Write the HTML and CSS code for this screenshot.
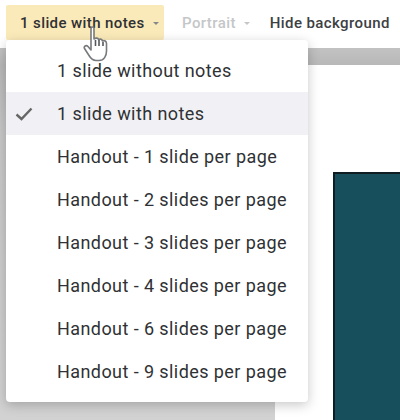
FILE: index.html
```html
<!DOCTYPE html>
<html lang="en">
<head>
<meta charset="utf-8">
<title>Print settings</title>
<link rel="stylesheet" href="styles.css">
</head>
<body>
<div class="toolbar">
  <div class="tool active"><span>1 slide with notes</span><i class="caret"></i></div>
  <div class="tool disabled"><span>Portrait</span><i class="caret"></i></div>
  <div class="tool plain"><span>Hide background</span></div>
</div>
<div class="stage">
  <div class="page"><div class="slide"></div></div>
</div>
<ul class="menu">
  <li>1 slide without notes</li>
  <li class="selected"><svg class="check" width="18" height="14" viewBox="0 0 18 14"><path d="M1.5 7.5 L6.5 12 L16.5 1.5" fill="none" stroke="#666" stroke-width="2.4"/></svg>1 slide with notes</li>
  <li>Handout - 1 slide per page</li>
  <li>Handout - 2 slides per page</li>
  <li>Handout - 3 slides per page</li>
  <li>Handout - 4 slides per page</li>
  <li>Handout - 6 slides per page</li>
  <li>Handout - 9 slides per page</li>
</ul>
<svg class="cursor" width="30" height="38" viewBox="0 0 30 38">
  <path d="M8 3.5 C8 1.5 11 1.5 11 3.5 L11 14 C13 12.5 15 13 15.5 14.5 C17.5 13.5 19 14.5 19.5 16 C21.5 15 23.5 16 23.5 18.5 L23.5 26 C23.5 31 21 35.5 16 35.5 L13 35.5 C9.5 35.5 7.5 33 6 30.5 L1.5 23.5 C0.5 21.5 3 19.5 5 21.5 L8 25 Z" fill="#fff" stroke="#77797c" stroke-width="1.6" stroke-linejoin="round"/>
  <path d="M12.5 15 V21 M16 15 V21 M20 17 V21" stroke="#55575a" stroke-width="1.6" fill="none"/>
</svg>
</body>
</html>
```
FILE: styles.css
```css
html, body {
  margin: 0;
  padding: 0;
}
body {
  width: 400px;
  height: 420px;
  overflow: hidden;
  position: relative;
  background: #fff;
  font-family: Roboto, "Liberation Sans", sans-serif;
  display: flex;
  flex-direction: column;
}
.toolbar {
  height: 48px;
  flex: none;
  display: flex;
  align-items: flex-start;
  padding: 5px 0 0 6px;
  box-sizing: border-box;
  font-size: 15px;
  letter-spacing: 0.4px;
  font-weight: 500;
  color: #3c4043;
  white-space: nowrap;
}
.tool {
  height: 35px;
  display: flex;
  align-items: center;
  gap: 8px;
  border-radius: 2px;
}
.active {
  width: 158px;
  padding-left: 14px;
  box-sizing: border-box;
  background: #fbeab9;
  color: #2f3134;
}
.disabled {
  margin-left: 18px;
  color: #c4c6c8;
}
.plain {
  margin-left: 20px;
}
.caret {
  width: 0;
  height: 0;
  margin-top: 2px;
  border-left: 3.5px solid transparent;
  border-right: 3.5px solid transparent;
  border-top: 3.5px solid #85888b;
}
.disabled .caret {
  border-top-color: #c4c6c8;
}
.stage {
  flex: 1;
  background: linear-gradient(#c2c2c2, #b8b8b8 17px, #c8c8c8 90px, #d2d2d2);
  padding: 17px 0 0 275px;
  display: flex;
}
.page {
  flex: 1;
  background: #fff;
  padding: 107px 0 0 58px;
  display: flex;
}
.slide {
  flex: 1;
  background: #174f5d;
  border-top: 2px solid #0e1d22;
  border-left: 2px solid #0e1d22;
}
.menu {
  position: absolute;
  left: 6px;
  top: 40px;
  width: 302px;
  height: 362px;
  margin: 0;
  padding: 9px 0;
  box-sizing: border-box;
  list-style: none;
  background: #fff;
  border-radius: 4px;
  box-shadow: 0 3px 12px rgba(0, 0, 0, 0.22);
  display: flex;
  flex-direction: column;
  font-size: 18px;
  letter-spacing: 0.42px;
  color: #2f3134;
}
.menu li {
  position: relative;
  height: 43px;
  flex: none;
  display: flex;
  align-items: center;
  padding-left: 51px;
  white-space: nowrap;
}
.menu .selected {
  background: #f1f1f5;
}
.check {
  position: absolute;
  left: 9px;
  top: 15px;
}
.cursor {
  position: absolute;
  left: 83px;
  top: 25px;
}
```
